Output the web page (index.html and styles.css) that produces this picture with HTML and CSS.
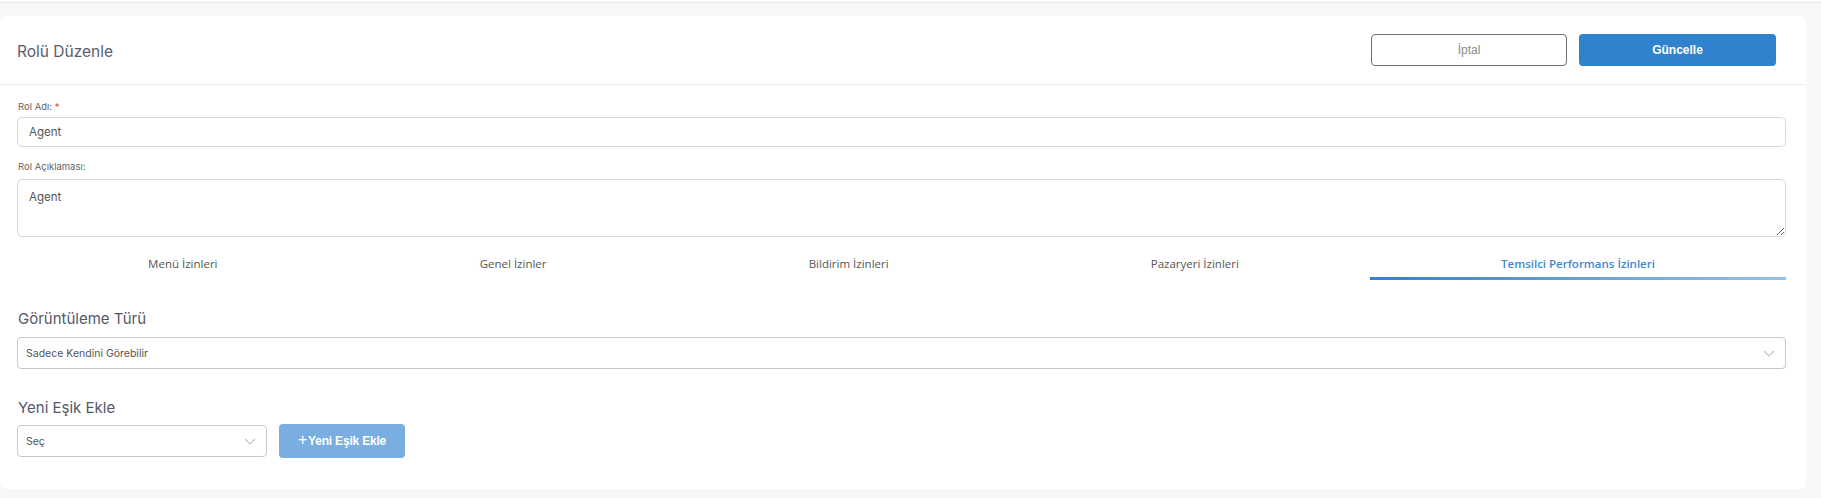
FILE: index.html
```html
<!DOCTYPE html>
<html lang="tr">
<head>
<meta charset="utf-8">
<title>Rolü Düzenle</title>
<link rel="stylesheet" href="styles.css">
</head>
<body>
<div class="topline"></div>
<div class="card">
  <div class="card-header">
    <h1 class="title">Rolü Düzenle</h1>
    <div class="actions">
      <button class="btn btn-outline">İptal</button>
      <button class="btn btn-primary">Güncelle</button>
    </div>
  </div>
  <div class="card-body">
    <label class="label label-first">Rol Adı: <span class="req">*</span></label>
    <input class="input" type="text" value="Agent">
    <label class="label label-second">Rol Açıklaması:</label>
    <textarea class="textarea">Agent</textarea>
    <div class="tabs">
      <div class="tab">Menü İzinleri</div>
      <div class="tab">Genel İzinler</div>
      <div class="tab">Bildirim İzinleri</div>
      <div class="tab">Pazaryeri İzinleri</div>
      <div class="tab tab-active">Temsilci Performans İzinleri</div>
    </div>
    <h2 class="section-title first">Görüntüleme Türü</h2>
    <div class="select select-full">
      <span>Sadece Kendini Görebilir</span>
      <svg class="chev" width="12" height="7" viewBox="0 0 12 7"><polyline points="1,1 6,6 11,1" fill="none" stroke="#c4c4c4" stroke-width="1.2"/></svg>
    </div>
    <h2 class="section-title second">Yeni Eşik Ekle</h2>
    <div class="row">
      <div class="select select-small">
        <span>Seç</span>
        <svg class="chev" width="12" height="7" viewBox="0 0 12 7"><polyline points="1,1 6,6 11,1" fill="none" stroke="#c4c4c4" stroke-width="1.2"/></svg>
      </div>
      <button class="btn btn-add"><span class="plus">+</span>Yeni Eşik Ekle</button>
    </div>
  </div>
</div>
</body>
</html>
```

FILE: styles.css
```css
* { box-sizing: border-box; }
html, body { margin: 0; padding: 0; }
body {
  background: #f7f7f7;
  font-family: Inter, "Noto Sans", sans-serif;
  width: 1821px;
  height: 498px;
  overflow: hidden;
}
.topline {
  height: 3px;
  background: #fbfbfb;
  border-bottom: 1px solid #e8e8e8;
}
.card {
  margin: 13px 15px 0 0;
  width: 1806px;
  height: 473px;
  background: #fff;
  border-radius: 6px;
}
.card-header {
  height: 69px;
  border-bottom: 1px solid #ededed;
  display: flex;
  align-items: center;
  justify-content: space-between;
  padding: 0 30px 0 17px;
}
.title {
  margin: 0;
  font-size: 15.5px;
  font-weight: 400;
  color: #5a5d6e;
  padding-top: 3px;
}
.actions { display: flex; gap: 12px; }
.btn {
  height: 32px;
  border-radius: 4px;
  font-family: "Liberation Sans", Arial, sans-serif;
  font-size: 12px;
  cursor: pointer;
}
.btn-outline {
  width: 196px;
  background: #fff;
  border: 1px solid #707070;
  color: #8a8a8a;
}
.btn-primary {
  width: 197px;
  background: #3182ce;
  border: none;
  color: #fff;
  font-weight: 700;
}
.card-body {
  padding: 15px 20px 0 17px;
  display: flex;
  flex-direction: column;
}
.label {
  font-size: 9.5px;
  line-height: 14px;
  color: #666;
  padding-left: 1px;
}
.label-first { margin-bottom: 3px; }
.label-second { margin-top: 13px; margin-bottom: 5px; }
.req { color: #e53e3e; }
.input {
  height: 30px;
  border: 1px solid #d6d6dd;
  border-radius: 5px;
  padding: 0 11px;
  font-family: Inter, sans-serif;
  font-size: 11.5px;
  color: #555;
  outline: none;
}
.textarea {
  height: 58px;
  border: 1px solid #d6d6dd;
  border-radius: 5px;
  padding: 10px 11px;
  font-family: Inter, sans-serif;
  font-size: 11.5px;
  color: #555;
  outline: none;
  resize: vertical;
  display: block;
}
.tabs {
  display: flex;
}
.tab {
  flex: 1 1 auto;
  text-align: center;
  font-family: "Open Sans", sans-serif;
  font-size: 11.5px;
  line-height: 16px;
  color: #555;
  padding: 19px 0 5px;
  border-bottom: 3px solid transparent;
}
.tab-active {
  color: #3b8ad6;
  font-weight: 600;
  border-image: linear-gradient(to right, #3182ce, #95c1ea) 1;
}
.section-title {
  margin: 0;
  font-size: 15px;
  line-height: 20px;
  font-weight: 400;
  color: #545768;
  padding-left: 1px;
}
.section-title.first { margin-top: 29px; margin-bottom: 8px; }
.section-title.second { margin-top: 29px; margin-bottom: 6px; }
.select {
  height: 32px;
  border: 1px solid #c9c9c9;
  border-radius: 4px;
  display: flex;
  align-items: center;
  justify-content: space-between;
  padding: 0 10px 0 8px;
  font-size: 10.5px;
  color: #555;
}
.select-small { width: 250px; }
.row {
  display: flex;
  align-items: center;
  gap: 12px;
}
.btn-add {
  width: 126px;
  height: 34px;
  background: #7aaee0;
  border: none;
  color: #fff;
  font-weight: 700;
  font-size: 12px;
  display: flex;
  align-items: center;
  justify-content: center;
  letter-spacing: -0.2px;
}
.plus {
  font-weight: 400;
  font-size: 16px;
  margin-right: 1px;
  margin-top: -2px;
}
```
